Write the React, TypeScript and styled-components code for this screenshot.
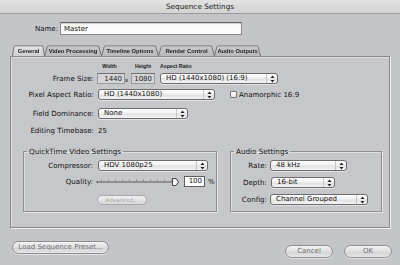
import styled, { createGlobalStyle } from 'styled-components';

const GlobalStyle = createGlobalStyle`
  html, body {
    margin: 0;
    padding: 0;
    background: #c4c5c9;
  }
  body {
    font-family: "DejaVu Sans", "Liberation Sans", sans-serif;
    font-size: 7px;
    color: #111;
  }
`;

function PopupArrows() {
  return (
    <svg width="5" height="8" viewBox="0 0 5 8">
      <path d="M2.5 0.5 L4.5 3 H0.5 Z" fill="#222" />
      <path d="M2.5 7.5 L4.5 5 H0.5 Z" fill="#222" />
    </svg>
  );
}

function QualitySlider() {
  const ticks = Array.from({ length: 11 }, (_, i) => 5 + i * 7);
  return (
    <svg width="84" height="11" viewBox="0 0 84 11">
      <circle cx="1.5" cy="6" r="1" fill="#444" />
      <line x1="3" y1="6" x2="78" y2="6" stroke="#5c5c5c" strokeWidth="1" />
      {ticks.map((x) => (
        <line key={x} x1={x + 0.5} y1="3.5" x2={x + 0.5} y2="6" stroke="#8a8a8a" strokeWidth="1" />
      ))}
      <path d="M76.5 2.5 H80 L82.5 6 L80 9.5 H76.5 Z" fill="#f4f4f4" stroke="#444" strokeWidth="1" />
    </svg>
  );
}

export default function App() {
  return (
    <>
      <GlobalStyle />
      <Window>
        <TitleBar>Sequence Settings</TitleBar>
        <Body>
          <NameRow>
            <NameLabel>Name:</NameLabel>
            <NameInput defaultValue="Master" />
          </NameRow>

          <Tabs>
            <Tab $w={33} $active>General</Tab>
            <Tab $w={58}>Video Processing</Tab>
            <Tab $w={58}>Timeline Options</Tab>
            <Tab $w={57}>Render Control</Tab>
            <Tab $w={47}>Audio Outputs</Tab>
          </Tabs>

          <Panel>
            <FrameGrid>
              <span />
              <ColHead>Width</ColHead>
              <span />
              <ColHead>Height</ColHead>
              <ColHead $left>Aspect Ratio</ColHead>

              <Label $w={83}>Frame Size:</Label>
              <NumberBox $w={28}>1440</NumberBox>
              <Times>x</Times>
              <NumberBox $w={24}>1080</NumberBox>
              <Popup $w={118}>
                <PopupText>HD (1440x1080) (16:9)</PopupText>
                <PopupButton><PopupArrows /></PopupButton>
              </Popup>
            </FrameGrid>

            <Row $mt={5} $gap={4}>
              <Label $w={83}>Pixel Aspect Ratio:</Label>
              <Popup $w={117}>
                <PopupText>HD (1440x1080)</PopupText>
                <PopupButton><PopupArrows /></PopupButton>
              </Popup>
              <CheckRow>
                <CheckBox />
                <span>Anamorphic 16:9</span>
              </CheckRow>
            </Row>

            <Row $mt={8} $gap={4}>
              <Label $w={83}>Field Dominance:</Label>
              <Popup $w={90}>
                <PopupText>None</PopupText>
                <PopupButton><PopupArrows /></PopupButton>
              </Popup>
            </Row>

            <Row $mt={6} $gap={4}>
              <Label $w={83}>Editing Timebase:</Label>
              <span>25</span>
            </Row>

            <Groups>
              <Group $w={194}>
                <Legend>QuickTime Video Settings</Legend>
                <Row $mt={0} $gap={5}>
                  <Label $w={69}>Compressor:</Label>
                  <Popup $w={110}>
                    <PopupText>HDV 1080p25</PopupText>
                    <PopupButton><PopupArrows /></PopupButton>
                  </Popup>
                </Row>
                <Row $mt={5} $gap={3}>
                  <Label $w={69}>Quality:</Label>
                  <QualitySlider />
                  <QualityField>100</QualityField>
                  <span>%</span>
                </Row>
                <AdvancedRow>
                  <SmallButton disabled>Advanced...</SmallButton>
                </AdvancedRow>
              </Group>

              <Group $w={152}>
                <Legend>Audio Settings</Legend>
                <Row $mt={0} $gap={3}>
                  <Label $w={36}>Rate:</Label>
                  <Popup $w={77}>
                    <PopupText>48 kHz</PopupText>
                    <PopupButton><PopupArrows /></PopupButton>
                  </Popup>
                </Row>
                <Row $mt={6} $gap={4}>
                  <Label $w={36}>Depth:</Label>
                  <Popup $w={64}>
                    <PopupText>16-bit</PopupText>
                    <PopupButton><PopupArrows /></PopupButton>
                  </Popup>
                </Row>
                <Row $mt={6} $gap={3}>
                  <Label $w={36}>Config:</Label>
                  <Popup $w={98}>
                    <PopupText>Channel Grouped</PopupText>
                    <PopupButton><PopupArrows /></PopupButton>
                  </Popup>
                </Row>
              </Group>
            </Groups>
          </Panel>

          <Footer>
            <PillButton $w={97}>Load Sequence Preset...</PillButton>
            <FooterRight>
              <PillButton $w={48}>Cancel</PillButton>
              <PillButton $w={48}>OK</PillButton>
            </FooterRight>
          </Footer>
        </Body>
      </Window>
    </>
  );
}

const Window = styled.div`
  width: 400px;
  height: 265px;
  display: flex;
  flex-direction: column;
  background: #c4c5c9;
  overflow: hidden;
`;

const TitleBar = styled.div`
  height: 13px;
  line-height: 13px;
  text-align: center;
  font-size: 7.3px;
  color: #222;
  background: linear-gradient(#e2e2e2, #d3d3d3);
  border-bottom: 1px solid #9c9c9e;
`;

const Body = styled.div`
  padding: 0 10px;
`;

const NameRow = styled.div`
  display: flex;
  align-items: center;
  gap: 2px;
  margin-top: 8px;
  height: 13px;
`;

const NameLabel = styled.span`
  width: 48px;
  text-align: right;
`;

const NameInput = styled.input`
  width: 182px;
  height: 13px;
  box-sizing: border-box;
  margin: 0;
  padding: 0 3px;
  font-family: "DejaVu Sans", sans-serif;
  font-size: 7px;
  color: #111;
  background: #fbfbfb;
  border: 1px solid #8a8a8a;
  border-top-color: #5e5e5e;
  box-shadow: inset 0 1px 1px rgba(0, 0, 0, 0.18);
  outline: none;
`;

const Tabs = styled.div`
  display: flex;
  margin: 10px 0 0 2px;
  height: 11px;
`;

const Tab = styled.div<{ $w: number; $active?: boolean }>`
  position: relative;
  width: ${(p) => p.$w}px;
  height: 11px;
  line-height: 12px;
  margin-right: -1px;
  text-align: center;
  font-family: "Liberation Sans", sans-serif;
  font-weight: bold;
  font-size: 5.8px;
  color: #1e1e1e;
  z-index: ${(p) => (p.$active ? 2 : 1)};

  &::before {
    content: '';
    position: absolute;
    left: 0;
    right: 0;
    top: -1px;
    bottom: 0;
    border: 1px solid #6f6f72;
    border-bottom: none;
    border-radius: 2px 2px 0 0;
    background: ${(p) =>
      p.$active ? 'linear-gradient(#e4e4e6, #cfd0d3)' : 'linear-gradient(#c9cacd, #b8b9bd)'};
    transform: perspective(20px) rotateX(12deg);
    transform-origin: bottom;
    z-index: -1;
  }
`;

const Panel = styled.div`
  width: 380px;
  height: 172px;
  box-sizing: border-box;
  padding-top: 5px;
  background: #c6c7cb;
  border: 1px solid #8a8a8d;
  box-shadow: inset 1px 1px 0 #dcdde0, 1px 1px 0 #ececee;
`;

const FrameGrid = styled.div`
  display: grid;
  grid-template-columns: 83px 28px 9px 24px 118px;
  grid-template-rows: 8px 11px;
  column-gap: 0;
  row-gap: 3px;
  align-items: center;

  & > :first-child + * {
    margin-left: 3px;
  }
  & > :nth-child(7) {
    margin-left: 3px;
  }
  & > :nth-child(5),
  & > :nth-child(10) {
    margin-left: 5px;
  }
`;

const ColHead = styled.span<{ $left?: boolean }>`
  font-family: "Liberation Sans", sans-serif;
  font-weight: bold;
  font-size: 5.2px;
  line-height: 8px;
  color: #222;
  text-align: ${(p) => (p.$left ? 'left' : 'center')};
  white-space: nowrap;
`;

const Label = styled.span<{ $w: number }>`
  width: ${(p) => p.$w}px;
  flex-shrink: 0;
  text-align: right;
  white-space: nowrap;
  font-size: 7.1px;
`;

const NumberBox = styled.div<{ $w: number }>`
  width: ${(p) => p.$w}px;
  height: 11px;
  box-sizing: border-box;
  padding-right: 2px;
  line-height: 10px;
  text-align: right;
  background: #d4d5d8;
  border: 1px solid #9a9a9c;
  border-top-color: #707072;
  color: #222;
`;

const Times = styled.span`
  text-align: center;
  font-size: 6px;
  padding-top: 2px;
`;

const Row = styled.div<{ $mt: number; $gap: number }>`
  display: flex;
  align-items: center;
  gap: ${(p) => p.$gap}px;
  height: 11px;
  margin-top: ${(p) => p.$mt}px;
  white-space: nowrap;
`;

const Popup = styled.div<{ $w: number }>`
  display: flex;
  align-items: stretch;
  flex-shrink: 0;
  width: ${(p) => p.$w}px;
  height: 11px;
  box-sizing: border-box;
  border: 1px solid #6c6c6e;
  border-radius: 3px;
  background: linear-gradient(#ffffff, #f1f1f1 45%, #e2e2e2 55%, #f4f4f4);
  box-shadow: 0 1px 0 rgba(255, 255, 255, 0.5);
  overflow: hidden;
`;

const PopupText = styled.span`
  flex: 1;
  padding-left: 5px;
  line-height: 9px;
  font-size: 7px;
  color: #111;
  overflow: hidden;
`;

const PopupButton = styled.span`
  width: 10px;
  display: flex;
  align-items: center;
  justify-content: center;
  border-left: 1px solid #c4c4c6;
`;

const CheckRow = styled.span`
  display: flex;
  align-items: center;
  gap: 2px;
  margin-left: 11px;
`;

const CheckBox = styled.span`
  width: 7px;
  height: 7px;
  box-sizing: border-box;
  border: 1px solid #747476;
  border-radius: 1px;
  background: linear-gradient(#ffffff, #e6e6e6);
`;

const Groups = styled.div`
  display: flex;
  gap: 13px;
  margin: 11px 0 0 12px;
`;

const Group = styled.fieldset<{ $w: number }>`
  width: ${(p) => p.$w}px;
  min-width: 0;
  box-sizing: border-box;
  margin: 0;
  padding: 4px 0 6px;
  border: 1px solid #8e8e90;
  box-shadow: inset 1px 1px 0 #dedfe2, 1px 1px 0 #e3e4e6;
`;

const Legend = styled.legend`
  margin-left: 3px;
  padding: 0 2px;
  font-size: 7.2px;
  line-height: 9px;
  color: #111;
`;

const QualityField = styled.div`
  width: 21px;
  height: 11px;
  box-sizing: border-box;
  margin-left: 1px;
  padding-right: 2px;
  line-height: 9px;
  text-align: right;
  background: #fff;
  border: 1px solid #5e5e60;
`;

const AdvancedRow = styled.div`
  margin-top: 8px;
  padding-left: 73px;
  height: 10px;
`;

const SmallButton = styled.button`
  width: 50px;
  height: 10px;
  padding: 0;
  font-family: "DejaVu Sans", sans-serif;
  font-size: 5.6px;
  line-height: 8px;
  color: #a4a4a6;
  border: 1px solid #a8a8aa;
  border-radius: 5px;
  background: linear-gradient(#f0f0f0, #d8d8da);
`;

const Footer = styled.div`
  display: flex;
  justify-content: space-between;
  align-items: flex-start;
  margin: 13px -2px 0 2px;
`;

const FooterRight = styled.div`
  display: flex;
  gap: 11px;
  margin-top: 4px;
`;

const PillButton = styled.button<{ $w: number }>`
  width: ${(p) => p.$w}px;
  height: 13px;
  padding: 0;
  font-family: "DejaVu Sans", sans-serif;
  font-size: 7px;
  line-height: 11px;
  color: #707072;
  border: 1px solid #8e8e90;
  border-radius: 7px;
  background: linear-gradient(#f4f4f4, #dedee0 50%, #d2d2d4 51%, #e6e6e8);
  box-shadow: 0 1px 0 rgba(255, 255, 255, 0.5);
`;
